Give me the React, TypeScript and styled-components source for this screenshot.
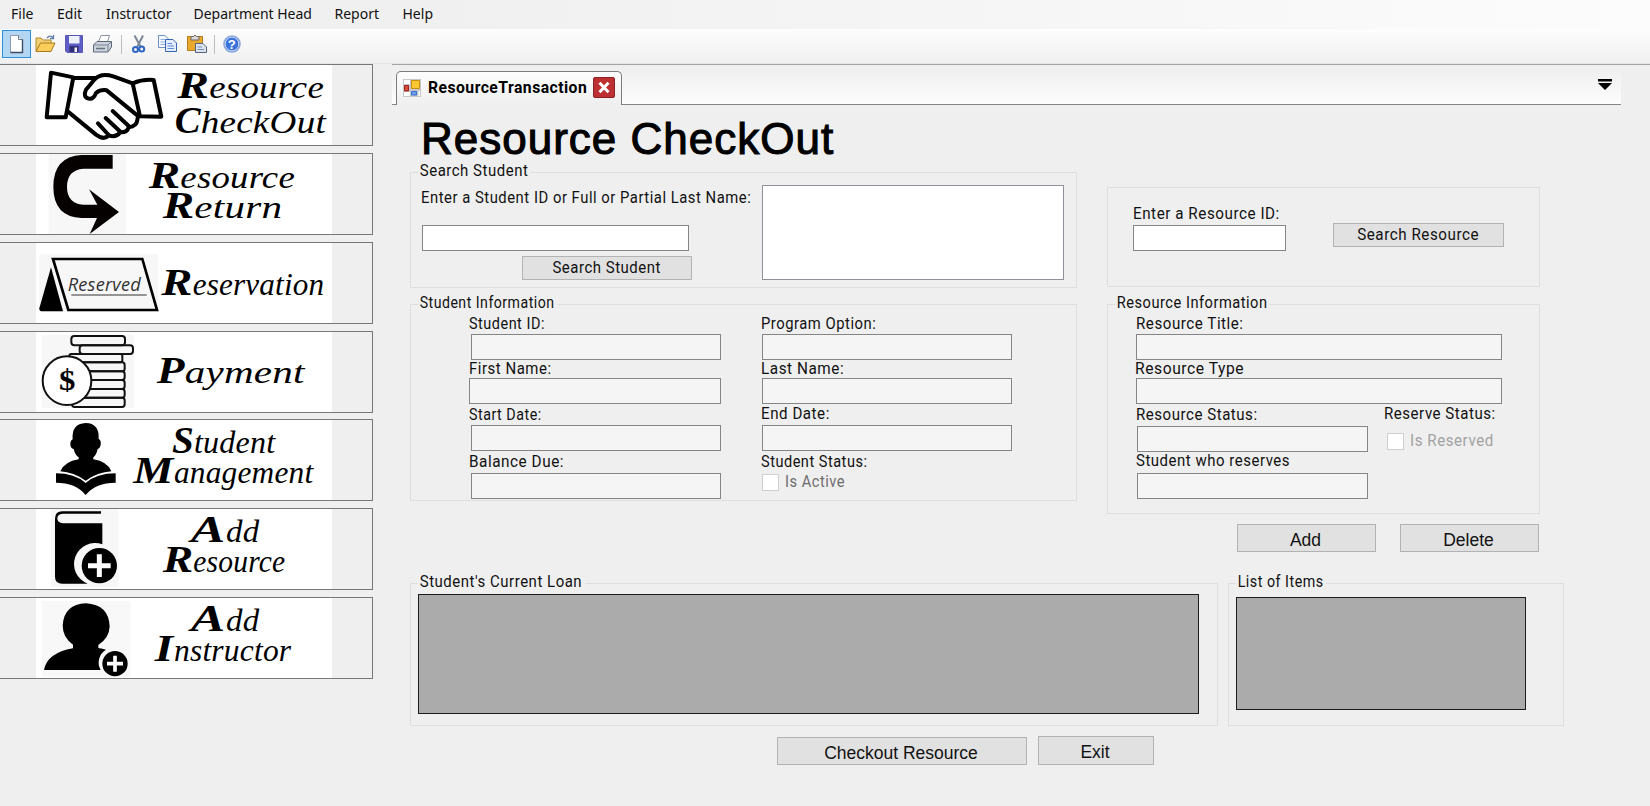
import React from 'react';
import styled, { createGlobalStyle, css } from 'styled-components';

const GlobalStyle = createGlobalStyle`
  * { box-sizing: border-box; }
  body { margin: 0; background: #efefef; }
`;

const formFont = css`
  font-family: Roboto, 'Liberation Sans', sans-serif;
  font-size: 17px;
  letter-spacing: 0.6px;
`;

const Window = styled.div`
  width: 1650px;
  height: 806px;
  overflow: hidden;
  display: flex;
  flex-direction: column;
  background: #efefef;
  color: #111;
  ${formFont}
`;

const MenuBar = styled.nav`
  height: 29px;
  flex: none;
  display: flex;
  align-items: flex-start;
  padding-left: 11px;
  gap: 24px;
  background: linear-gradient(90deg, #f0f0f0, #f0f0f0 25%, #fcfcfc);
  font-family: 'Noto Sans', sans-serif;
  font-size: 14px;
  letter-spacing: 0;
`;

const MenuItem = styled.span<{ $w: number }>`
  width: ${(p) => p.$w}px;
  white-space: nowrap;
  line-height: 27px;
`;

const ToolBar = styled.div`
  height: 35px;
  flex: none;
  display: flex;
  align-items: flex-start;
  padding: 1px 0 0 2px;
  background: linear-gradient(#fdfdfd, #f0f0f0);
  border-bottom: 1px solid #e4e4e4;
`;

const ToolButton = styled.span<{ $on?: boolean }>`
  width: 29px;
  height: 28px;
  display: flex;
  align-items: center;
  justify-content: center;
  border: 1px solid ${(p) => (p.$on ? '#2c8fdc' : 'transparent')};
  background: ${(p) => (p.$on ? '#b3d7f3' : 'none')};
`;

const ToolDivider = styled.i`
  width: 1px;
  height: 19px;
  margin: 5px 2px 0 3px;
  background: #bdbdbd;
`;

const Body = styled.div`
  flex: 1;
  display: flex;
  min-height: 0;
`;

const Sidebar = styled.aside`
  width: 392px;
  flex: none;
  display: flex;
  flex-direction: column;
  gap: 6.75px;
  padding-top: 0.3px;
`;

const Tile = styled.div`
  width: 373.4px;
  height: 82px;
  padding-left: 36px;
  border: 1px solid #777;
  border-left: 0;
  flex: none;
`;

const Art = styled.svg`
  display: block;
  width: 296px;
  height: 80px;
  background: #fff;
`;

const Main = styled.main`
  flex: 1;
  display: flex;
  flex-direction: column;
`;

const TopRule = styled.div`
  height: 2px;
  border-top: 1px solid #a3a3a3;
`;

const TabStrip = styled.div`
  width: 1229px;
  height: 39px;
  display: flex;
  justify-content: space-between;
  background: linear-gradient(#eeeeee, #fdfdfd);
  box-shadow: inset 0 -1px #858585;
`;

const Tab = styled.div`
  width: 226px;
  height: 34px;
  margin: 5px 0 0 4px;
  padding: 0 6px 2px;
  display: flex;
  align-items: center;
  border: 1px solid #7c7c7c;
  border-bottom: 0;
  border-radius: 5px 5px 0 0;
  background: linear-gradient(#fdfdfd, #efefef);
`;

const TabTitle = styled.b`
  width: 165px;
  margin: -2px 0 0 7px;
  color: #000;
  letter-spacing: 0.5px;
  white-space: nowrap;
  transform: scaleX(0.925);
  transform-origin: left;
`;

const MenuArrow = styled.svg`
  margin: 12px 9px 0 0;
`;

const Form = styled.div`
  flex: 1;
  padding-left: 18px;
`;

const Columns = styled.div`
  display: flex;
`;

const LeftColumn = styled.div`
  width: 667px;
`;

const RightColumn = styled.div`
  width: 433px;
  margin-left: 30px;
  padding-top: 82px;
`;

const Title = styled.h1`
  height: 67px;
  margin: 0;
  padding: 8px 0 0 11px;
  font: 400 44px/52px 'Liberation Sans', Arial, sans-serif;
  letter-spacing: 1px;
  color: #000;
  -webkit-text-stroke: 1.1px #000;
  white-space: nowrap;
`;

const Group = styled.section<{ $w?: number; $h: number; $mt?: number }>`
  width: ${(p) => (p.$w ? `${p.$w}px` : '100%')};
  height: ${(p) => p.$h}px;
  margin-top: ${(p) => p.$mt ?? 0}px;
  border: 1px solid #dedede;
`;

/* $s condenses the letterforms horizontally. */
const Legend = styled.div<{ $s: number }>`
  width: max-content;
  height: 20px;
  margin: -13px 0 0 7px;
  padding: 0 3px 0 2px;
  line-height: 20px;
  background: #efefef;
  white-space: nowrap;
  transform: scaleX(${(p) => p.$s});
  transform-origin: left;
`;

const Row = styled.div<{ $pl?: number; $pt?: number; $gap?: number }>`
  display: flex;
  align-items: flex-start;
  padding: ${(p) => p.$pt ?? 0}px 0 0 ${(p) => p.$pl ?? 0}px;
  gap: ${(p) => p.$gap ?? 0}px;
`;

const Stack = styled.div<{ $w?: number }>`
  width: ${(p) => (p.$w ? `${p.$w}px` : 'auto')};
  flex: none;
`;

const Label = styled.label<{ $s: number; $mt?: number; $ml?: number }>`
  display: block;
  width: max-content;
  height: 16px;
  margin: ${(p) => p.$mt ?? 0}px 0 0 ${(p) => p.$ml ?? 0}px;
  line-height: 16px;
  white-space: nowrap;
  transform: scaleX(${(p) => p.$s});
  transform-origin: left;
`;

const Field = styled.input<{ $w: number; $mt?: number; $ml?: number }>`
  display: block;
  width: ${(p) => p.$w}px;
  height: 26px;
  margin: ${(p) => p.$mt ?? 0}px 0 0 ${(p) => p.$ml ?? 0}px;
  border: 1px solid #858585;
  border-radius: 0;
  background: ${(p) => (p.readOnly ? '#f5f5f5' : '#fff')};
  outline: 0;
`;

const ListBox = styled.div`
  width: 302px;
  height: 95px;
  margin-top: 5px;
  border: 1px solid #8e9199;
  background: #fff;
`;

const Button = styled.button<{ $w: number; $h?: number; $mt?: number; $ml?: number; $plain?: boolean }>`
  display: flex;
  align-items: center;
  justify-content: center;
  width: ${(p) => p.$w}px;
  height: ${(p) => p.$h ?? 24}px;
  margin: ${(p) => p.$mt ?? 0}px 0 0 ${(p) => p.$ml ?? 0}px;
  padding: ${(p) => (p.$plain ? '4px 2px 0 0' : '0 0 2px')};
  border: 1px solid #b2b2b2;
  background: #e1e1e1;
  color: #111;
  white-space: nowrap;
  ${formFont}
  ${(p) => p.$plain && css`font: 17.5px 'Liberation Sans', Arial, sans-serif; letter-spacing: 0;`}
`;

const Caption = styled.span<{ $s: number }>`
  transform: scaleX(${(p) => p.$s});
`;

const Check = styled.label<{ $mt: number; $ml?: number; $tone: string }>`
  display: flex;
  align-items: center;
  gap: 6px;
  height: 17px;
  margin: ${(p) => p.$mt}px 0 0 ${(p) => p.$ml ?? 0}px;
  color: ${(p) => p.$tone};
  white-space: nowrap;
`;

const CheckCaption = styled.span<{ $s: number }>`
  margin-top: -3px;
  line-height: 16px;
  transform: scaleX(${(p) => p.$s});
  transform-origin: left;
`;

const CheckBox = styled.i`
  width: 17px;
  height: 17px;
  border: 1px solid #cfcfcf;
  background: #fff;
`;

const DataGrid = styled.div<{ $w: number; $h: number; $mt: number; $ml: number }>`
  width: ${(p) => p.$w}px;
  height: ${(p) => p.$h}px;
  margin: ${(p) => p.$mt}px 0 0 ${(p) => p.$ml}px;
  border: 1px solid #1c1c1c;
  background: #ababab;
`;

const Script = ({ x, y, cap, rest, capW, restX, restW }: {
  x: number; y: number; cap: string; rest: string; capW: number; restX: number; restW: number;
}) => (
  <g fontFamily="'Liberation Serif', serif" fontStyle="italic" fill="#000">
    <text x={x} y={y} fontSize="116" fontWeight="700" textLength={capW} lengthAdjust="spacingAndGlyphs">{cap}</text>
    <text x={restX} y={y} fontSize="94" textLength={restW} lengthAdjust="spacingAndGlyphs">{rest}</text>
  </g>
);

const CheckOutArt = () => (
  <Art viewBox="108 15 888 240">
    <g fill="none" stroke="#000" strokeWidth="12" strokeLinejoin="round" strokeLinecap="round">
      <path d="M153 38 L220 52 L197 172 L140 172 Z" />
      <path d="M398 70 Q428 57 461 60 L484 170 L420 169 Z" />
      <path d="M222 54 L286 54 M203 154 L288 224 Q312 242 326 226 Q348 234 361 217 Q382 218 386 202 Q410 199 412 180 L414 168" />
      <path d="M398 70 L340 49 Q303 38 284 58 L258 89 Q248 111 266 116 Q280 119 288 99 Q302 88 320 91 L408 163" />
      <path d="M338 153 L386 198 M317 174 L362 216 M294 190 L326 225" />
    </g>
    <Script x={532} y={113} cap="R" capW={96} rest="esource" restX={628} restW={344} />
    <Script x={524} y={220} cap="C" capW={78} rest="heckOut" restX={602} restW={376} />
  </Art>
);

const ReturnArt = () => (
  <Art viewBox="108 282 888 240">
    <path d="M146 282H378V522H146Z" fill="#f7f7f7" />
    <path d="M338 285V326H250Q201 330 201 380Q201 430 250 434H292L267 388L357 456L269 522L291 474H245Q160 470 160 380Q160 290 245 285Z" fill="#050101" />
    <Script x={446} y={383} cap="R" capW={95} rest="esource" restX={541} restW={344} />
    <Script x={488} y={474} cap="R" capW={95} rest="eturn" restX={583} restW={264} />
  </Art>
);

const ReservationArt = () => (
  <Art viewBox="108 21 888 240">
    <path d="M118 54H474V228H118Z" fill="#f7f7f7" />
    <path d="M153 94L189 226H124Q118 226 118 217Z" />
    <path d="M159 69H427L471 222H205Z" fill="none" stroke="#000" strokeWidth="8" />
    <text x="203" y="164" fontFamily="'Open Sans', sans-serif" fontStyle="italic" fontWeight="400" fontSize="54" fill="#333" textLength="220" lengthAdjust="spacingAndGlyphs">Reserved</text>
    <path d="M214 177H440" stroke="#333" strokeWidth="3" />
    <Script x={484} y={177} cap="R" capW={94} rest="eservation" restX={578} restW={395} />
  </Art>
);

const PaymentArt = () => (
  <Art viewBox="108 288 888 240">
    <path d="M125 297H402V516H125Z" fill="#f7f7f7" />
    <g fill="none" stroke="#111" strokeWidth="6">
      <rect x="214" y="300" width="161" height="28" rx="9" />
      <rect x="239" y="328" width="160" height="26" rx="9" />
      <rect x="208" y="354" width="159" height="25" rx="6" />
      <rect x="216" y="379" width="158" height="27" rx="8" />
      <rect x="216" y="406" width="158" height="26" rx="8" />
      <rect x="216" y="432" width="158" height="27" rx="8" />
      <rect x="216" y="459" width="158" height="26" rx="8" />
      <rect x="216" y="485" width="158" height="28" rx="8" />
      <circle cx="201" cy="434" r="73" fill="#fff" />
    </g>
    <text x="177" y="462" fontFamily="'Liberation Serif', serif" fontWeight="700" fontSize="88" textLength="50" lengthAdjust="spacingAndGlyphs">$</text>
    <Script x={470} y={440} cap="P" capW={84} rest="ayment" restX={554} restW={360} />
  </Art>
);

const StudentArt = () => (
  <Art viewBox="108 31 888 240">
    <path d="M257 40Q299 41 296 88Q304 91 302 107Q300 116 293 118Q289 136 280 143V149Q323 156 334 185Q293 188 257 213Q221 188 181 185Q193 156 236 149V143Q225 136 221 118Q211 116 211 103Q211 92 218 89Q214 42 257 40Z" />
    <path d="M168 191Q224 191 257 220Q290 191 347 191V219Q287 219 257 256Q227 219 168 219Z" />
    <Script x={516} y={130} cap="S" capW={66} rest="tudent" restX={582} restW={244} />
    <Script x={400} y={219} cap="M" capW={121} rest="anagement" restX={522} restW={418} />
  </Art>
);

const AddResourceArt = () => (
  <Art viewBox="108 297 888 240">
    <path d="M153 298H356V530H153Z" fill="#f7f7f7" />
    <path d="M303 304H187Q165 304 165 326V500Q165 521 187 521H263A62 62 0 0 1 307 403V340H189Q172 338 172 325Q173 312 188 311H303Z" />
    <circle cx="298" cy="467" r="53" />
    <path d="M264 467H332M298 433V501" stroke="#fff" strokeWidth="15" />
    <Script x={572} y={397} cap="A" capW={104} rest="dd" restX={678} restW={100} />
    <Script x={488} y={486} cap="R" capW={92} rest="esource" restX={580} restW={276} />
  </Art>
);

const AddInstructorArt = () => (
  <Art viewBox="108 563 888 240">
    <path d="M126 572H392V800H126Z" fill="#f8f8f8" />
    <path d="M132 779Q141 728 219 714V703Q188 682 188 645Q192 582 258 579Q326 583 329 648Q328 683 295 704V713Q308 715 318 718A45 45 0 0 0 302 779Z" />
    <circle cx="345" cy="760" r="38" />
    <path d="M321 760H369M345 736V784" stroke="#fff" strokeWidth="11" />
    <Script x={572} y={663} cap="A" capW={104} rest="dd" restX={678} restW={100} />
    <Script x={464} y={752} cap="I" capW={56} rest="nstructor" restX={522} restW={352} />
  </Art>
);

const Icon = ({ children }: { children: React.ReactNode }) => (
  <svg width="22" height="20" viewBox="0 0 22 20">{children}</svg>
);

const NewIcon = () => (
  <Icon>
    <path d="M4.500 1.500H12.500L16.500 5.500V18.500H4.500Z" fill="#fff" stroke="#8c9bb0" />
    <path d="M12.500 1.500V5.500H16.500" fill="#dfe7f2" stroke="#6b7c93" />
    <path d="M16.500 5.500V18.500H4.500" fill="none" stroke="#3d4d66" strokeWidth="1.400" />
  </Icon>
);

const OpenIcon = () => (
  <Icon>
    <path d="M1 17V4H6L8 6H16V9" fill="#f3cf73" stroke="#b28a2c" />
    <path d="M1 17.500L5.500 9H20L16 17.500Z" fill="#fbcd5a" stroke="#a87a1d" />
    <path d="M12 4Q15 .5 18 3.500M18.500 1V4.500H15" fill="none" stroke="#5f7fa8" strokeWidth="1.300" />
  </Icon>
);

const SaveIcon = () => (
  <Icon>
    <path d="M1.500 1.500H18.500V18.500H3L1.500 17Z" fill="#5f5cc8" stroke="#5a58b4" />
    <path d="M5 2H15.500V9.500H5Z" fill="#eef1fa" />
    <path d="M5.500 12H14.500V18H5.500Z" fill="#2f2f72" />
    <path d="M10.500 13.500H13V18H10.500Z" fill="#f3f3f8" />
  </Icon>
);

const PrintIcon = () => (
  <Icon>
    <path d="M5 9L8 1.500H16.500L14 9Z" fill="#fff" stroke="#8a93a3" />
    <path d="M.5 11L4 7.500H18.500V13L15 18H.5Z" fill="#cdd3dd" stroke="#5b6678" />
    <path d="M.5 11H15V18M15 11L18.500 7.500" fill="none" stroke="#7b8596" />
    <path d="M3 14.500H12" stroke="#66707f" strokeWidth="1.500" />
  </Icon>
);

const CutIcon = () => (
  <Icon>
    <path d="M6.500 1.500L12.800 13M15 1.500L9.200 13" stroke="#7c8798" strokeWidth="2" />
    <circle cx="7.500" cy="15.500" r="2.500" fill="none" stroke="#2f66c4" strokeWidth="2" />
    <circle cx="13.700" cy="15" r="2.500" fill="none" stroke="#2f66c4" strokeWidth="2" />
  </Icon>
);

const CopyIcon = () => (
  <Icon>
    <path d="M1.500 1.500H8L11.500 5V13.500H1.500Z" fill="#f5f8fd" stroke="#6d8fc4" />
    <path d="M3.500 5.500H8M3.500 8H9M3.500 10.500H9" stroke="#8db0e0" />
    <path d="M8.500 5.500H16L19.500 9V17.500H8.500Z" fill="#e4edfb" stroke="#3966b4" />
    <path d="M10.500 9.500H15M10.500 12H17M10.500 14.500H17" stroke="#5f8fd8" />
  </Icon>
);

const PasteIcon = () => (
  <Icon>
    <path d="M1.500 2.500H16.500V16.500H1.500Z" fill="#e8a92c" stroke="#b27e1c" />
    <path d="M5 2.500H7.500Q9 -.5 10.500 2.500H13V6H5Z" fill="#d7d9dd" stroke="#75695a" />
    <path d="M9.500 9.500H17L20.500 13V18.500H9.500Z" fill="#dbe3ee" stroke="#55637c" />
    <path d="M11.500 13H16M11.500 15.500H18" stroke="#7990b5" />
  </Icon>
);

const HelpIcon = () => (
  <Icon>
    <circle cx="11" cy="10" r="8" fill="#3a72dc" stroke="#8ba8da" strokeWidth="1.600" />
    <circle cx="11" cy="10" r="6.800" fill="none" stroke="#e8effb" strokeWidth=".8" />
    <text x="11" y="14.500" textAnchor="middle" fontFamily="'Liberation Sans', sans-serif" fontWeight="700" fontSize="13" fill="#fff">?</text>
  </Icon>
);

const FormIcon = () => (
  <svg width="18" height="18" viewBox="0 0 18 18">
    <rect width="18" height="18" fill="#c6c6cb" />
    <path d="M1 1h6v4H1zM1 13h6v4H1zM15.500 12H17v5h-1.500z" fill="#fff" />
    <path d="M1.500 6.500h4v5.500h-4z" fill="#d44a3b" stroke="#a3241b" />
    <path d="M8.500 1.500h8v8h-8z" fill="#fbc832" stroke="#c98f11" />
    <path d="M8.500 12.500h5v3.500h-5z" fill="#6c9ff0" stroke="#3c70ce" />
  </svg>
);

const CloseIcon = () => (
  <svg width="22" height="21" viewBox="0 0 22 21">
    <rect x=".5" y=".5" width="21" height="20" rx="1.500" fill="#bd3032" stroke="#8d2022" />
    <path d="M6.500 5.800L15.500 15.200M15.500 5.800L6.500 15.200" stroke="#fff" strokeWidth="3" />
  </svg>
);

const menus: [string, number][] = [
  ['File', 22], ['Edit', 25], ['Instructor', 63.5], ['Department Head', 117], ['Report', 44], ['Help', 31],
];

const tiles = [CheckOutArt, ReturnArt, ReservationArt, PaymentArt, StudentArt, AddResourceArt, AddInstructorArt];

export default function App() {
  return (
    <Window>
      <GlobalStyle />
      <MenuBar>
        {menus.map(([name, w]) => <MenuItem key={name} $w={w}>{name}</MenuItem>)}
      </MenuBar>
      <ToolBar>
        <ToolButton $on><NewIcon /></ToolButton>
        <ToolButton><OpenIcon /></ToolButton>
        <ToolButton><SaveIcon /></ToolButton>
        <ToolButton><PrintIcon /></ToolButton>
        <ToolDivider />
        <ToolButton><CutIcon /></ToolButton>
        <ToolButton><CopyIcon /></ToolButton>
        <ToolButton><PasteIcon /></ToolButton>
        <ToolDivider />
        <ToolButton><HelpIcon /></ToolButton>
      </ToolBar>
      <Body>
        <Sidebar>
          {tiles.map((Picture, i) => <Tile key={i}><Picture /></Tile>)}
        </Sidebar>
        <Main>
          <TopRule />
          <TabStrip>
            <Tab>
              <FormIcon />
              <TabTitle>ResourceTransaction</TabTitle>
              <CloseIcon />
            </Tab>
            <MenuArrow width="14" height="13" viewBox="0 0 14 13">
              <path d="M0 1H14V3.500H0ZM0 5H14L7 12Z" />
            </MenuArrow>
          </TabStrip>
          <Form>
            <Columns>
              <LeftColumn>
                <Title>Resource CheckOut</Title>
                <Group $h={116}>
                  <Legend $s={0.88}>Search Student</Legend>
                  <Row>
                    <Stack $w={351}>
                      <Label $s={0.872} $mt={9} $ml={10}>Enter a Student ID or Full or Partial Last Name:</Label>
                      <Field $w={267} $mt={20} $ml={11} />
                      <Button $w={170} $mt={5} $ml={111}><Caption $s={0.88}>Search Student</Caption></Button>
                    </Stack>
                    <ListBox />
                  </Row>
                </Group>
                <Group $h={197} $mt={16}>
                  <Legend $s={0.83}>Student Information</Legend>
                  <Row $pl={57.5}>
                    <Stack $w={293.5}>
                      <Label $s={0.85} $mt={3}>Student ID:</Label>
                      <Field readOnly $w={250} $mt={3} $ml={2.5} />
                      <Label $s={0.88}>First Name:</Label>
                      <Field readOnly $w={252} $mt={2} $ml={0.5} />
                      <Label $s={0.84} $mt={2}>Start Date:</Label>
                      <Field readOnly $w={250} $mt={3} $ml={2.5} />
                      <Label $s={0.9} $mt={2}>Balance Due:</Label>
                      <Field readOnly $w={250} $mt={4} $ml={2.5} />
                    </Stack>
                    <Stack>
                      <Label $s={0.87} $ml={-1} $mt={3}>Program Option:</Label>
                      <Field readOnly $w={250} $mt={3} />
                      <Label $s={0.9} $ml={-1}>Last Name:</Label>
                      <Field readOnly $w={250} $mt={2} />
                      <Label $s={0.89} $ml={-1} $mt={1}>End Date:</Label>
                      <Field readOnly $w={250} $mt={4} />
                      <Label $s={0.855} $ml={-1} $mt={2}>Student Status:</Label>
                      <Check $mt={5} $tone="#6d6d6d"><CheckBox /><CheckCaption $s={0.86}>Is Active</CheckCaption></Check>
                    </Stack>
                  </Row>
                </Group>
              </LeftColumn>
              <RightColumn>
                <Group $h={100}>
                  <Row $pl={25} $pt={17}>
                    <Stack $w={200}>
                      <Label $s={0.895}>Enter a Resource ID:</Label>
                      <Field $w={153} $mt={4} />
                    </Stack>
                    <Button $w={171} $mt={18}><Caption $s={0.895}>Search Resource</Caption></Button>
                  </Row>
                </Group>
                <Group $h={210} $mt={17}>
                  <Legend $s={0.86}>Resource Information</Legend>
                  <Row $pl={28}>
                    <Stack $w={248}>
                      <Label $s={0.89} $mt={3}>Resource Title:</Label>
                      <Field readOnly $w={366} $mt={3} />
                      <Label $s={0.92} $ml={-1}>Resource Type</Label>
                      <Field readOnly $w={366} $mt={2} />
                      <Label $s={0.885} $mt={2}>Resource Status:</Label>
                      <Field readOnly $w={231} $mt={4} $ml={1} />
                      <Label $s={0.88}>Student who reserves</Label>
                      <Field readOnly $w={231} $mt={5} $ml={1} />
                    </Stack>
                    <Stack>
                      <Label $s={0.885} $mt={93}>Reserve Status:</Label>
                      <Check $mt={12} $ml={3} $tone="#a2a2a2"><CheckBox /><CheckCaption $s={0.89}>Is Reserved</CheckCaption></Check>
                    </Stack>
                  </Row>
                </Group>
                <Row $pl={130} $pt={10} $gap={24}>
                  <Button $plain $w={139} $h={28}>Add</Button>
                  <Button $plain $w={139} $h={28}>Delete</Button>
                </Row>
              </RightColumn>
            </Columns>
            <Row $pt={31} $gap={10}>
              <Group $w={808} $h={143}>
                <Legend $s={0.88}>Student's Current Loan</Legend>
                <DataGrid $w={781} $h={120} $mt={3} $ml={7} />
              </Group>
              <Group $w={336} $h={143}>
                <Legend $s={0.84}>List of Items</Legend>
                <DataGrid $w={290} $h={113} $mt={6} $ml={7} />
              </Group>
            </Row>
            <Row $pl={367} $pt={10} $gap={11}>
              <Button $plain $w={250} $h={28} $mt={1}>Checkout Resource</Button>
              <Button $plain $w={116} $h={29}>Exit</Button>
            </Row>
          </Form>
        </Main>
      </Body>
    </Window>
  );
}
